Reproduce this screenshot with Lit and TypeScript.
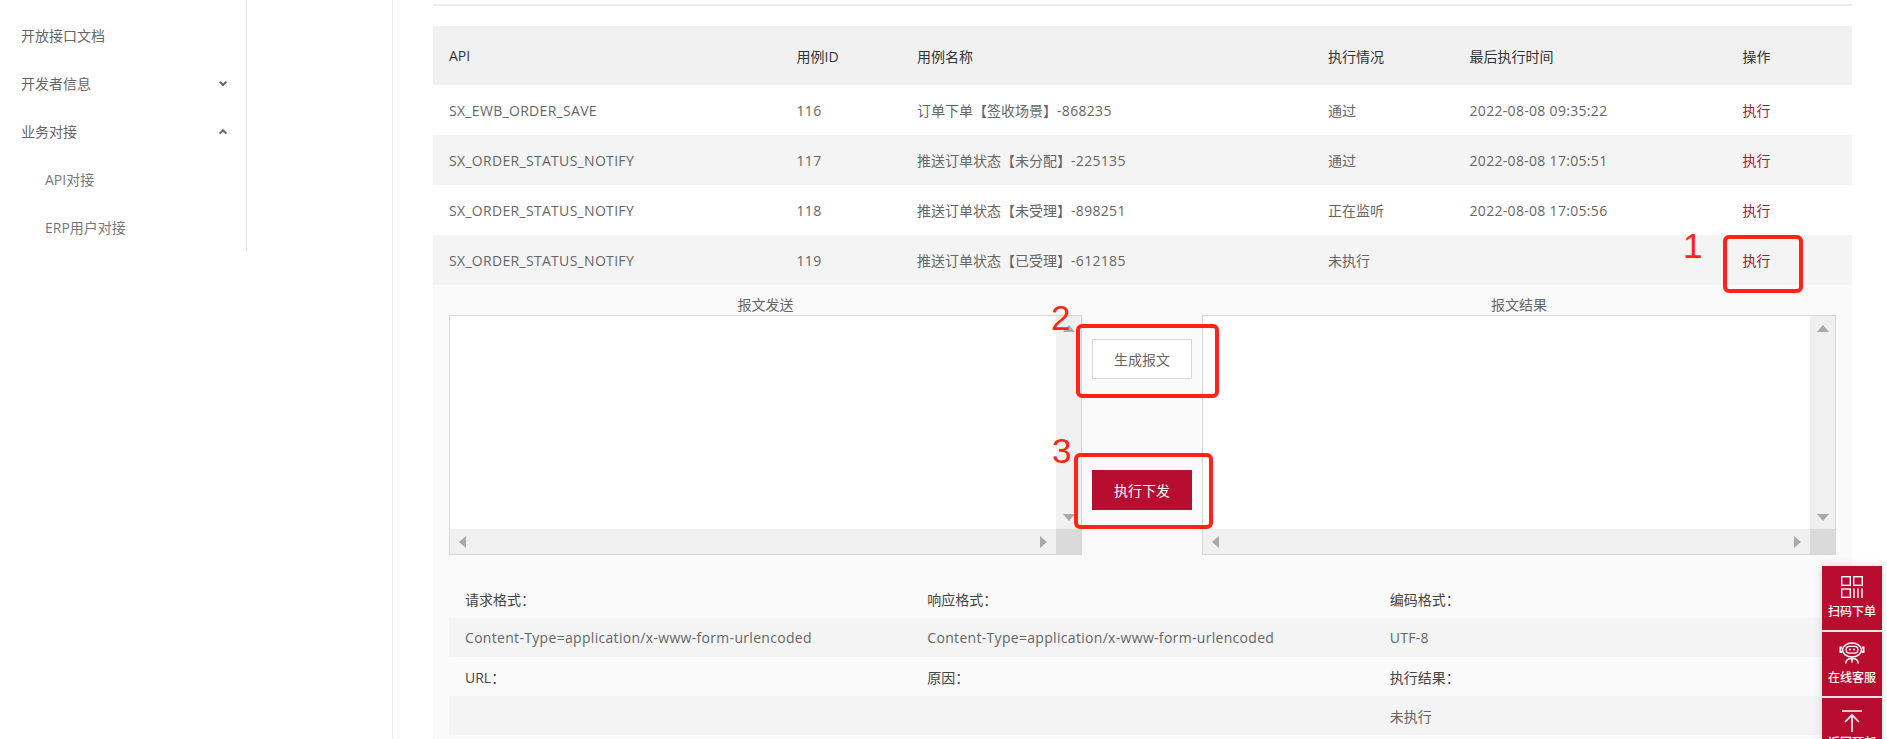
import { LitElement, html, css } from "lit";
import { customElement } from "lit/decorators.js";

const rows = [
  { api: "SX_EWB_ORDER_SAVE", id: "116", name: "订单下单【签收场景】", code: "-868235", state: "通过", time: "2022-08-08 09:35:22" },
  { api: "SX_ORDER_STATUS_NOTIFY", id: "117", name: "推送订单状态【未分配】", code: "-225135", state: "通过", time: "2022-08-08 17:05:51" },
  { api: "SX_ORDER_STATUS_NOTIFY", id: "118", name: "推送订单状态【未受理】", code: "-898251", state: "正在监听", time: "2022-08-08 17:05:56" },
  { api: "SX_ORDER_STATUS_NOTIFY", id: "119", name: "推送订单状态【已受理】", code: "-612185", state: "未执行", time: "" },
];

const chevron = (up: boolean) => html`<svg class="chev" width="10" height="7" viewBox="0 0 10 7">
  <path d=${up ? "M1.6 5.6 L5 2.2 L8.4 5.6" : "M1.6 1.6 L5 5 L8.4 1.6"} fill="none" stroke="#666" stroke-width="2"/>
</svg>`;

const tri = (dir: "u" | "d" | "l" | "r") => {
  const p = { u: "M0 7 L6 0 L12 7 Z", d: "M0 0 L12 0 L6 7 Z", l: "M7 0 L7 12 L0 6 Z", r: "M0 0 L7 6 L0 12 Z" }[dir];
  const w = dir === "u" || dir === "d" ? 12 : 7;
  const h = dir === "u" || dir === "d" ? 7 : 12;
  return html`<svg width=${w} height=${h} viewBox="0 0 ${w} ${h}"><path d=${p} fill="#a9a9a9"/></svg>`;
};

const box = () => html`<div class="box">
  <div class="box-main"></div>
  <div class="vbar">${tri("u")}${tri("d")}</div>
  <div class="hbar">${tri("l")}${tri("r")}</div>
  <div class="corner"></div>
</div>`;

@customElement("app-root")
export class AppRoot extends LitElement {
  static styles = css`
    :host {
      display: block;
      position: relative;
      width: 1887px;
      height: 739px;
      overflow: hidden;
      background: #fff;
      font-family: "Open Sans", "Noto Sans CJK SC", sans-serif;
      font-size: 14px;
      color: #666;
    }
    .page { display: flex; align-items: flex-start; height: 739px; }
    .lat { letter-spacing: 0.31px; }
    .side {
      width: 246px;
      flex: none;
      border-right: 1px solid #e8e8e8;
      padding-top: 11px;
      height: 240px;
    }
    .side-item {
      height: 48px;
      display: flex;
      align-items: center;
      justify-content: space-between;
      padding: 0 18px 0 21px;
      color: #666;
    }
    .side-item.sub { padding-left: 45px; color: #777; }
    .chev { display: block; }
    .spacer { width: 145px; flex: none; }
    .main {
      flex: 1;
      height: 739px;
      border-left: 1px solid #ececec;
      padding: 4px 35px 0 40px;
      box-sizing: border-box;
      min-width: 0;
    }
    .rule { height: 2px; background: #ebebeb; margin-bottom: 20px; }
    .row {
      display: grid;
      grid-template-columns: 347.5px 120.5px 411px 141.5px 273px 125.5px;
      height: 50px;
      align-items: center;
    }
    .row > div { padding-left: 16px; white-space: nowrap; }
    .row.head { height: 59px; background: #f1f1f1; color: #333; }
    .row.alt { background: #f4f4f4; }
    .run { color: #b90d30; }
    .panel {
      background: #fafafa;
      padding: 10px 16px 4px;
      height: 454px;
      box-sizing: border-box;
    }
    .labels {
      display: grid;
      grid-template-columns: 633px 120px 634px;
      height: 20px;
      line-height: 20px;
      text-align: center;
    }
    .editors { display: grid; grid-template-columns: 633px 120px 634px; height: 240px; }
    .box {
      display: grid;
      grid-template-columns: 1fr 25px;
      grid-template-rows: 1fr 25px;
      border: 1px solid #d6d6d6;
      box-sizing: border-box;
      background: #fff;
    }
    .vbar {
      background: #f0f0f0;
      display: flex;
      flex-direction: column;
      justify-content: space-between;
      align-items: center;
      padding: 9px 0 8px;
    }
    .hbar {
      background: #f0f0f0;
      display: flex;
      justify-content: space-between;
      align-items: center;
      padding: 0 9px;
    }
    .corner { background: #dadada; }
    .actions { padding: 24px 0 0 10px; }
    .btn {
      width: 100px;
      height: 40px;
      display: flex;
      align-items: center;
      justify-content: center;
      box-sizing: border-box;
    }
    .btn.plain { background: #fff; border: 1px solid #d9d9d9; color: #666; }
    .btn.primary { background: #b90d30; color: #fff; margin-top: 91px; }
    .info { margin-top: 24px; }
    .info-row {
      display: grid;
      grid-template-columns: repeat(3, 1fr);
      height: 39px;
      align-items: center;
    }
    .info-row > div { padding-left: 16px; white-space: nowrap; }
    .info-row.label { color: #444; }
    .info-row.value { background: #f4f4f4; }
    .mark {
      position: absolute;
      border: 4px solid #ff2415;
      border-radius: 6px;
      box-sizing: border-box;
    }
    .m1 { left: 1723px; top: 235px; width: 80px; height: 58px; }
    .m2 { left: 1076px; top: 324px; width: 143px; height: 74px; }
    .m3 { left: 1074px; top: 453px; width: 139px; height: 76px; }
    .num {
      position: absolute;
      font-family: "Liberation Sans", sans-serif;
      font-size: 35px;
      line-height: 35px;
      color: #ff2415;
    }
    .n1 { left: 1683px; top: 228px; }
    .n2 { left: 1051px; top: 300px; }
    .n3 { left: 1052px; top: 433px; }
    .float {
      position: absolute;
      left: 1822px;
      top: 566px;
      display: flex;
      flex-direction: column;
      gap: 2px;
      box-shadow: 0 0 8px rgba(0, 0, 0, 0.15);
      background: #e4e4e4;
    }
    .float-item {
      width: 60px;
      height: 64px;
      background: #b90d30;
      color: #fff;
      font-size: 12px;
      font-weight: 500;
      line-height: 16px;
      display: flex;
      flex-direction: column;
      align-items: center;
      padding-top: 10px;
      box-sizing: border-box;
      white-space: nowrap;
    }
    .float-item svg { display: block; margin-bottom: 6px; flex: none; }
    .float-item.top { padding-top: 12px; }
    .float-item.top svg { margin-bottom: 3px; }
  `;

  render() {
    return html`
      <div class="page">
        <nav class="side">
          <div class="side-item"><span>开放接口文档</span></div>
          <div class="side-item"><span>开发者信息</span>${chevron(false)}</div>
          <div class="side-item"><span>业务对接</span>${chevron(true)}</div>
          <div class="side-item sub"><span>API对接</span></div>
          <div class="side-item sub"><span>ERP用户对接</span></div>
        </nav>
        <div class="spacer"></div>
        <main class="main">
          <div class="rule"></div>
          <div class="row head">
            <div>API</div><div>用例ID</div><div>用例名称</div><div>执行情况</div><div>最后执行时间</div><div>操作</div>
          </div>
          ${rows.map(
            (r, i) => html`<div class="row ${i % 2 ? "alt" : ""}">
              <div class="lat">${r.api}</div>
              <div class="lat">${r.id}</div>
              <div>${r.name}<span class="lat">${r.code}</span></div>
              <div>${r.state}</div>
              <div class="lat">${r.time}</div>
              <div class="run">执行</div>
            </div>`
          )}
          <div class="panel">
            <div class="labels"><div>报文发送</div><div></div><div>报文结果</div></div>
            <div class="editors">
              ${box()}
              <div class="actions">
                <div class="btn plain">生成报文</div>
                <div class="btn primary">执行下发</div>
              </div>
              ${box()}
            </div>
            <div class="info">
              <div class="info-row label"><div>请求格式：</div><div>响应格式：</div><div>编码格式：</div></div>
              <div class="info-row value">
                <div class="lat">Content-Type=application/x-www-form-urlencoded</div>
                <div class="lat">Content-Type=application/x-www-form-urlencoded</div>
                <div class="lat">UTF-8</div>
              </div>
              <div class="info-row label"><div>URL：</div><div>原因：</div><div>执行结果：</div></div>
              <div class="info-row value"><div></div><div></div><div>未执行</div></div>
            </div>
          </div>
        </main>
      </div>

      <div class="mark m1"></div>
      <div class="mark m2"></div>
      <div class="mark m3"></div>
      <div class="num n1">1</div>
      <div class="num n2">2</div>
      <div class="num n3">3</div>

      <div class="float">
        <div class="float-item">
          <svg width="22" height="22" viewBox="0 0 22 22" fill="none" stroke="#fff" stroke-width="1.4">
            <rect x="0.7" y="0.7" width="8.6" height="8.6"/>
            <rect x="12.7" y="0.7" width="8.6" height="8.6"/>
            <rect x="0.7" y="13" width="8.6" height="8.3"/>
            <path d="M13 12.5V22M17 12.5V22M21 12.5V22"/>
          </svg>
          <span>扫码下单</span>
        </div>
        <div class="float-item">
          <svg width="26" height="22" viewBox="0 0 26 22" fill="none" stroke="#fff" stroke-width="1.5">
            <ellipse cx="13" cy="8" rx="9.4" ry="7"/>
            <path d="M3 5.5H1.4V10H3M23 5.5H24.6V10H23" stroke-width="1.8"/>
            <path d="M10.5 4.4H15.5A3.4 3.4 0 0 1 15.5 11.2H10.5A3.4 3.4 0 0 1 10.5 4.4Z" stroke-width="1.3"/>
            <circle cx="11" cy="7.6" r="1" fill="#fff" stroke="none"/>
            <circle cx="15" cy="7.6" r="1" fill="#fff" stroke="none"/>
            <path d="M6.8 21.5C6.8 18.4 9 16.6 13 16.6S19.2 18.4 19.2 21.5M13 16.6V20.5"/>
          </svg>
          <span>在线客服</span>
        </div>
        <div class="float-item top">
          <svg width="22" height="22" viewBox="0 0 22 22" fill="none" stroke="#fff" stroke-width="1.6">
            <path d="M1 1H21M11 5V22M4 12L11 5L18 12"/>
          </svg>
          <span>返回顶部</span>
        </div>
      </div>
    `;
  }
}
